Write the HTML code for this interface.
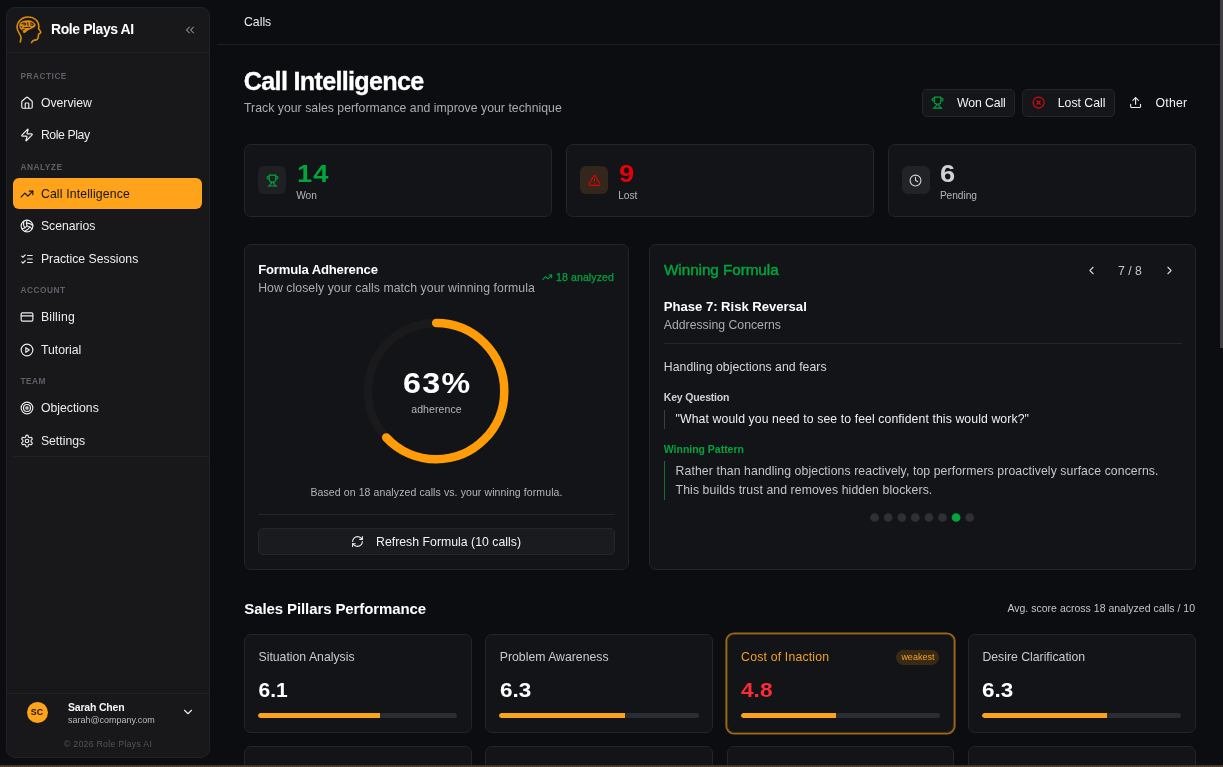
<!DOCTYPE html>
<html lang="en">
<head>
<meta charset="utf-8">
<title>Call Intelligence</title>
<style>
*{box-sizing:border-box;margin:0;padding:0}
html,body{width:1223px;height:767px;overflow:hidden;background:#0c0d11;}
body{font-family:"Liberation Sans",sans-serif;font-size:12.25px;color:#f2f2f3;position:relative;-webkit-font-smoothing:antialiased}
.abs{position:absolute}
svg{display:block}
/* ---------- sidebar ---------- */
#sb{position:absolute;left:6px;top:7px;width:204px;height:751px;background:#18181b;border:1px solid #222327;border-radius:9px;}
#sb .hd{position:absolute;left:0;top:0;width:100%;height:45px;border-bottom:1px solid #202125}
#sb .brand{position:absolute;left:44px;top:13px;font-weight:bold;font-size:14px;letter-spacing:-0.42px;color:#fff;white-space:nowrap}
.lbl{position:absolute;left:13.5px;font-size:8.3px;letter-spacing:0.5px;color:#5f6068;font-weight:bold;white-space:nowrap}
.nav{position:absolute;left:6.4px;width:188.6px;height:31px;border-radius:6px;white-space:nowrap;color:#ececee}
.nav span{position:absolute;left:27.5px;top:9px;font-size:12.25px;line-height:15px}
.nav svg{position:absolute;left:7px;top:9px;width:14px;height:14px;fill:none;stroke:currentColor;stroke-width:2;stroke-linecap:round;stroke-linejoin:round}
.nav.on{background:#ffa31a;color:#141414}
#sb .sep{position:absolute;left:7px;right:0;top:448px;height:1px;background:#212226}
#sb .ft{position:absolute;left:0;right:0;top:685px;height:1px;background:#202125}
/* ---------- main ---------- */
#topline{position:absolute;left:217px;top:44px;width:1003px;height:1px;background:#1f2025}
.card{position:absolute;background:#131418;border:1px solid #24252a;border-radius:7px}
.btn{position:absolute;top:89px;height:27.7px;background:#15161a;border:1px solid #24252a;border-radius:5px;white-space:nowrap}
.btn span{position:absolute;top:6px;font-size:12.25px;line-height:15px;color:#f2f2f3}
.muted{color:#abacb3}
.ico{fill:none;stroke:currentColor;stroke-width:2;stroke-linecap:round;stroke-linejoin:round}
.sq{position:absolute;left:13px;top:21.5px;width:28px;height:28px;border-radius:6px}
.big{position:absolute;left:51.5px;top:14.3px;font-weight:bold;font-size:24.8px;line-height:30px;letter-spacing:1px;transform:scaleX(1.1);transform-origin:0 50%}
.sm{position:absolute;left:51.2px;top:44px;font-size:10.2px;letter-spacing:-0.05px;line-height:13px;color:#b4b5bb}
.pt{position:absolute;left:13.5px;top:15.2px;font-size:12.25px;line-height:15px;color:#c9cad0;white-space:nowrap}
.pv{position:absolute;left:13.5px;top:42.2px;font-weight:bold;font-size:21px;line-height:26px;color:#fff}
.bar{position:absolute;left:13px;right:13.5px;top:78px;height:5.2px;border-radius:2.6px;background:#2b2c31;overflow:hidden}
.bar i{display:block;height:5.2px;background:#fba31c;border-radius:2.6px 0 0 2.6px}
</style>
</head>
<body>
<div id="root" style="position:absolute;left:0;top:0;width:1223px;height:767px;overflow:hidden;will-change:transform;transform:translateZ(0)">

<!-- ================= SIDEBAR ================= -->
<div id="sb">
  <div class="hd"></div>
  <svg class="abs" style="left:3px;top:2px;width:40px;height:40px" viewBox="0 0 40 40">
    <g transform="translate(18.75 19.4) scale(0.96) translate(-18.7 -19.15)">
    <path d="M9.9 32.3 L10.7 28.2 C10.8 26.6 10 25.2 9 23.6 C7.6 21.4 6.5 19.4 6.5 17 C6.5 13.6 7.9 11.4 9.9 9.4 C12 7.4 14.6 6.3 17.7 6.3 C21.2 6.3 24 7.2 26.1 9.1 C28 10.9 29.2 13.4 29.2 16.2 C29.2 17 29 17.7 28.9 18.3 L30.9 21.2 C31.5 22.1 31.2 22.7 30.3 23.2 L28.9 24.2 C28.6 25.4 28.9 26.3 28.6 27.6 C28.2 29.3 27.2 30.1 25.6 30.3 C24.4 30.4 23.7 30.4 23.2 30.8 C22.4 31.5 22 32.2 21.6 32.9" fill="none" stroke="#dc8a12" stroke-width="1.65" stroke-linecap="round" stroke-linejoin="round"/>
    <path d="M8.9 14.3 C9.5 12.4 10.6 11.2 12.5 10.4 C14.6 9.6 16.6 9.4 18.6 9.6 C21.4 9.9 23.6 11 25 12.8 C26 14.1 26.1 15.4 25.4 16.2 C24.3 17.3 22.6 17.9 20.8 18.8 C19.2 19.6 17.8 20.2 16.8 21 C16 21.7 15.4 22.6 14.2 22.9 C13.2 23.1 12.7 22.6 12.8 21.6 C12.9 20.6 12 20.2 11 19.6 C9.4 18.6 8.4 16.4 8.9 14.3 Z" fill="#dc8a12"/>
    <g fill="none" stroke="#2a1c0a" stroke-width="1.1" stroke-linecap="round">
      <path d="M11.6 13.4 C12.8 12.2 14.4 12.2 15.4 13.2 C15.8 14.4 14.6 15 13.6 14.4"/>
      <path d="M17.6 12 C17.8 13 17.6 14 18 15"/>
      <path d="M20.6 12.4 C21.6 12.2 23.2 13 23.4 14.4 C22.6 15 21.4 15 20.8 14.4"/>
      <path d="M10.6 16.4 L11.6 16.8"/>
      <path d="M14 17.4 C15.4 16.8 17 17.6 18.4 17 C19 16.8 19.6 16.8 20 17.2"/>
      <path d="M12.6 19.4 L14 19.2"/>
    </g>
    </g>
  </svg>
  <div class="brand">Role Plays AI</div>
  <div class="lbl" style="top:62.9px;line-height:10px">PRACTICE</div>
  <div class="nav" style="top:79.4px"><svg viewBox="0 0 24 24"><path d="M15 21v-8a1 1 0 0 0-1-1h-4a1 1 0 0 0-1 1v8"/><path d="M3 10a2 2 0 0 1 .709-1.528l7-5.999a2 2 0 0 1 2.582 0l7 5.999A2 2 0 0 1 21 10v9a2 2 0 0 1-2 2H5a2 2 0 0 1-2-2z"/></svg><span>Overview</span></div>
  <div class="nav" style="top:111.2px"><svg viewBox="0 0 24 24"><path d="M4 14a1 1 0 0 1-.78-1.63l9.9-10.2a.5.5 0 0 1 .86.46l-1.92 6.02A1 1 0 0 0 13 10h7a1 1 0 0 1 .78 1.63l-9.9 10.2a.5.5 0 0 1-.86-.46l1.92-6.02A1 1 0 0 0 11 14z"/></svg><span style="letter-spacing:-0.4px">Role Play</span></div>
  <div class="lbl" style="top:153.9px;line-height:10px">ANALYZE</div>
  <div class="nav on" style="top:170.4px"><svg viewBox="0 0 24 24"><polyline points="22 7 13.5 15.5 8.5 10.5 2 17"/><polyline points="16 7 22 7 22 13"/></svg><span style="letter-spacing:0.15px">Call Intelligence</span></div>
  <div class="nav" style="top:202.2px"><svg viewBox="0 0 24 24"><path d="M11.1 7.1a16.55 16.55 0 0 1 10.9 4"/><path d="M12 12a12.6 12.6 0 0 1-8.7 5"/><path d="M16.8 13.6a16.55 16.55 0 0 1-9 7.5"/><path d="M20.7 17a12.8 12.8 0 0 0-8.7-5 13.3 13.3 0 0 1 0-10"/><path d="M6.3 3.8a16.55 16.55 0 0 0 1.9 11.5"/><circle cx="12" cy="12" r="10"/></svg><span>Scenarios</span></div>
  <div class="nav" style="top:235.2px"><svg viewBox="0 0 24 24"><path d="m3 17 2 2 4-4"/><path d="m3 7 2 2 4-4"/><path d="M13 6h8"/><path d="M13 12h8"/><path d="M13 18h8"/></svg><span>Practice Sessions</span></div>
  <div class="lbl" style="top:276.8px;line-height:10px">ACCOUNT</div>
  <div class="nav" style="top:293.2px"><svg viewBox="0 0 24 24"><rect width="20" height="14" x="2" y="5" rx="2"/><line x1="2" x2="22" y1="10" y2="10"/></svg><span style="letter-spacing:0.2px">Billing</span></div>
  <div class="nav" style="top:326.2px"><svg viewBox="0 0 24 24"><circle cx="12" cy="12" r="10"/><polygon points="10 8 16 12 10 16 10 8"/></svg><span>Tutorial</span></div>
  <div class="lbl" style="top:367.8px;line-height:10px">TEAM</div>
  <div class="nav" style="top:384.2px"><svg viewBox="0 0 24 24"><circle cx="12" cy="12" r="10"/><circle cx="12" cy="12" r="6"/><circle cx="12" cy="12" r="2"/></svg><span>Objections</span></div>
  <div class="nav" style="top:417.2px"><svg viewBox="0 0 24 24"><path d="M12.22 2h-.44a2 2 0 0 0-2 2v.18a2 2 0 0 1-1 1.73l-.43.25a2 2 0 0 1-2 0l-.15-.08a2 2 0 0 0-2.73.73l-.22.38a2 2 0 0 0 .73 2.73l.15.1a2 2 0 0 1 1 1.72v.51a2 2 0 0 1-1 1.74l-.15.09a2 2 0 0 0-.73 2.73l.22.38a2 2 0 0 0 2.73.73l.15-.08a2 2 0 0 1 2 0l.43.25a2 2 0 0 1 1 1.73V20a2 2 0 0 0 2 2h.44a2 2 0 0 0 2-2v-.18a2 2 0 0 1 1-1.73l.43-.25a2 2 0 0 1 2 0l.15.08a2 2 0 0 0 2.73-.73l.22-.39a2 2 0 0 0-.73-2.73l-.15-.08a2 2 0 0 1-1-1.74v-.5a2 2 0 0 1 1-1.74l.15-.09a2 2 0 0 0 .73-2.73l-.22-.38a2 2 0 0 0-2.73-.73l-.15.08a2 2 0 0 1-2 0l-.43-.25a2 2 0 0 1-1-1.73V4a2 2 0 0 0-2-2z"/><circle cx="12" cy="12" r="3"/></svg><span>Settings</span></div>
  <div class="sep"></div>
  <svg class="ico abs" style="left:176px;top:15px;width:14px;height:14px;color:#b9b9bf;stroke-width:1.7" viewBox="0 0 24 24"><path d="m11 17-5-5 5-5"/><path d="m18 17-5-5 5-5"/></svg>
  <div class="ft"></div>
  <div class="abs" style="left:19.5px;top:693.5px;width:21px;height:21px;border-radius:50%;background:#ffa31a;color:#1a1206;font-weight:bold;font-size:8.8px;line-height:21px;text-align:center;letter-spacing:0.2px">SC</div>
  <div class="abs" style="left:61px;top:693px;font-weight:bold;font-size:10.5px;line-height:13px;color:#f4f4f5;white-space:nowrap;letter-spacing:-0.2px">Sarah Chen</div>
  <div class="abs" style="left:61px;top:706.5px;font-size:9px;line-height:11px;color:#b9bac0;white-space:nowrap;letter-spacing:-0.02px">sarah@company.com</div>
  <svg class="ico abs" style="left:174px;top:697px;width:14px;height:14px;color:#e4e4e7" viewBox="0 0 24 24"><path d="m6 9 6 6 6-6"/></svg>
  <div class="abs" style="left:0;width:202px;top:730.5px;text-align:center;font-size:8.7px;line-height:11px;color:#54555c;letter-spacing:0.3px">© 2026 Role Plays AI</div>
</div>

<!-- ================= MAIN ================= -->
<div class="abs" style="left:244px;top:15.3px;font-size:12.25px;line-height:15px;color:#ececee">Calls</div>
<div id="topline"></div>

<div class="abs" style="left:243.8px;top:66.1px;-webkit-text-stroke:0.3px #fff;font-weight:bold;font-size:25.2px;line-height:30px;letter-spacing:-0.7px;color:#fff;white-space:nowrap">Call Intelligence</div>
<div class="abs muted" style="left:244px;top:100.8px;font-size:12.25px;line-height:15px;letter-spacing:0.03px;white-space:nowrap">Track your sales performance and improve your technique</div>

<div class="btn" style="left:922px;width:93px"><svg class="ico abs" style="left:8.3px;top:6px;width:13.2px;height:13.2px;color:#02a43e" viewBox="0 0 24 24"><path d="M6 9H4.5a2.5 2.5 0 0 1 0-5H6"/><path d="M18 9h1.5a2.5 2.5 0 0 0 0-5H18"/><path d="M4 22h16"/><path d="M10 14.66V17c0 .55-.47.98-.97 1.21C7.85 18.75 7 20.24 7 22"/><path d="M14 14.66V17c0 .55.47.98.97 1.21C16.15 18.75 17 20.24 17 22"/><path d="M18 2H6v7a6 6 0 0 0 12 0V2Z"/></svg><span style="left:34px;letter-spacing:-0.1px">Won Call</span></div>
<div class="btn" style="left:1021.8px;width:93px"><svg class="ico abs" style="left:8.8px;top:6px;width:13.2px;height:13.2px;color:#e10812" viewBox="0 0 24 24"><circle cx="12" cy="12" r="10"/><path d="m15 9-6 6"/><path d="m9 9 6 6"/></svg><span style="left:35px">Lost Call</span></div>
<svg class="ico abs" style="left:1129.2px;top:96.2px;width:13.2px;height:13.2px;color:#ececee" viewBox="0 0 24 24"><path d="M21 15v4a2 2 0 0 1-2 2H5a2 2 0 0 1-2-2v-4"/><polyline points="17 8 12 3 7 8"/><line x1="12" x2="12" y1="3" y2="15"/></svg>
<div class="abs" style="left:1155.6px;top:96.1px;font-size:12.25px;line-height:15px;letter-spacing:0.2px;color:#f2f2f3">Other</div>

<!-- stat cards -->
<div class="card" style="left:244px;top:143.5px;width:308px;height:73px">
  <div class="sq" style="background:#1f2024"><svg class="ico abs" style="left:7.5px;top:7.5px;width:13px;height:13px;color:#02a43e" viewBox="0 0 24 24"><path d="M6 9H4.5a2.5 2.5 0 0 1 0-5H6"/><path d="M18 9h1.5a2.5 2.5 0 0 0 0-5H18"/><path d="M4 22h16"/><path d="M10 14.66V17c0 .55-.47.98-.97 1.21C7.85 18.75 7 20.24 7 22"/><path d="M14 14.66V17c0 .55.47.98.97 1.21C16.15 18.75 17 20.24 17 22"/><path d="M18 2H6v7a6 6 0 0 0 12 0V2Z"/></svg></div>
  <div class="big" style="color:#02a43e">14</div><div class="sm">Won</div>
</div>
<div class="card" style="left:566px;top:143.5px;width:308px;height:73px">
  <div class="sq" style="background:#33261a"><svg class="ico abs" style="left:7.5px;top:7.5px;width:13px;height:13px;color:#e7000b" viewBox="0 0 24 24"><path d="m21.73 18-8-14a2 2 0 0 0-3.48 0l-8 14A2 2 0 0 0 4 21h16a2 2 0 0 0 1.73-3"/><path d="M12 9v4"/><path d="M12 17h.01"/></svg></div>
  <div class="big" style="color:#e7000b">9</div><div class="sm">Lost</div>
</div>
<div class="card" style="left:887.7px;top:143.5px;width:308px;height:73px">
  <div class="sq" style="background:#222327"><svg class="ico abs" style="left:7.5px;top:7.5px;width:13px;height:13px;color:#d4d4d8" viewBox="0 0 24 24"><circle cx="12" cy="12" r="10"/><polyline points="12 6 12 12 16 14"/></svg></div>
  <div class="big" style="color:#d0d1d6">6</div><div class="sm">Pending</div>
</div>

<!-- formula adherence -->
<div class="card" style="left:244px;top:244px;width:385px;height:325.5px">
  <div class="abs" style="left:13.2px;top:17px;font-weight:bold;font-size:13.1px;line-height:16px;letter-spacing:-0.17px;color:#fff;white-space:nowrap">Formula Adherence</div>
  <div class="abs muted" style="left:13.2px;top:35.8px;font-size:12.25px;line-height:15px;letter-spacing:0.06px;white-space:nowrap">How closely your calls match your winning formula</div>
  <svg class="ico abs" style="left:297px;top:27px;width:10.5px;height:10.5px;stroke-width:2.4;color:#02a43e" viewBox="0 0 24 24"><polyline points="22 7 13.5 15.5 8.5 10.5 2 17"/><polyline points="16 7 22 7 22 13"/></svg>
  <div class="abs" style="left:311px;top:26px;font-size:10.5px;line-height:13px;letter-spacing:0.12px;-webkit-text-stroke:0.25px #02a43e;color:#02a43e;white-space:nowrap">18 analyzed</div>
  <svg class="abs" style="left:111px;top:65.5px;width:160px;height:160px" viewBox="0 0 160 160">
    <circle cx="80.2" cy="80.2" r="68.1" fill="none" stroke="#1a1a1d" stroke-width="8.5"/>
    <circle cx="80.2" cy="80.2" r="68.1" fill="none" stroke="#ff9c08" stroke-width="8.5" stroke-linecap="round" stroke-dasharray="269.57 427.9" transform="rotate(-90 80.2 80.2)"/>
  </svg>
  <div class="abs" style="left:111px;width:161px;top:121px;text-align:center;font-weight:bold;font-size:29.3px;line-height:34px;letter-spacing:1.2px;color:#fff;text-indent:1.2px;transform:scaleX(1.1)">63%</div>
  <div class="abs" style="left:111px;width:161px;top:158.3px;text-align:center;font-size:10.5px;line-height:13px;letter-spacing:0.1px;color:#b4b5bb">adherence</div>
  <div class="abs" style="left:0;width:383px;top:241px;text-align:center;font-size:10.5px;line-height:13px;letter-spacing:0.1px;color:#b4b5bb">Based on 18 analyzed calls vs. your winning formula.</div>
  <div class="abs" style="left:13px;width:357px;top:269px;height:1px;background:#24252a"></div>
  <div class="abs" style="left:13px;width:357px;top:283.3px;height:27px;border:1px solid #25262b;border-radius:5px;background:#1a1b1f">
    <svg class="ico abs" style="left:91.5px;top:6px;width:13px;height:13px;color:#ececee" viewBox="0 0 24 24"><path d="M3 12a9 9 0 0 1 9-9 9.75 9.75 0 0 1 6.74 2.74L21 8"/><path d="M21 3v5h-5"/><path d="M21 12a9 9 0 0 1-9 9 9.75 9.75 0 0 1-6.74-2.74L3 16"/><path d="M8 16H3v5"/></svg>
    <div class="abs" style="left:117px;top:5.8px;font-size:12.25px;line-height:15px;letter-spacing:0.03px;color:#f2f2f3;white-space:nowrap">Refresh Formula (10 calls)</div>
  </div>
</div>

<!-- winning formula -->
<div class="card" style="left:649px;top:244px;width:547px;height:325.5px">
  <div class="abs" style="left:14px;top:16.1px;font-size:15.3px;line-height:18px;letter-spacing:-0.07px;-webkit-text-stroke:0.45px #02a43e;color:#02a43e;white-space:nowrap">Winning Formula</div>
  <svg class="ico abs" style="left:434.5px;top:19px;width:13px;height:13px;color:#d4d4d8" viewBox="0 0 24 24"><path d="m15 18-6-6 6-6"/></svg>
  <div class="abs" style="left:468px;top:18.7px;font-size:12.25px;line-height:15px;color:#c4c5cb;white-space:nowrap">7 / 8</div>
  <svg class="ico abs" style="left:512.5px;top:19px;width:13px;height:13px;color:#d4d4d8" viewBox="0 0 24 24"><path d="m9 18 6-6-6-6"/></svg>
  <div class="abs" style="left:13.8px;top:54px;font-weight:bold;font-size:13.1px;line-height:16px;letter-spacing:-0.02px;color:#fff;white-space:nowrap">Phase 7: Risk Reversal</div>
  <div class="abs muted" style="left:13.8px;top:73.2px;font-size:12.25px;line-height:15px;white-space:nowrap">Addressing Concerns</div>
  <div class="abs" style="left:14px;width:517.5px;top:98px;height:1px;background:#26272c"></div>
  <div class="abs" style="left:13.8px;top:114.6px;font-size:12.25px;line-height:15px;letter-spacing:0.05px;color:#d6d7db;white-space:nowrap">Handling objections and fears</div>
  <div class="abs" style="left:13.8px;top:146px;font-weight:bold;font-size:10.5px;line-height:13px;letter-spacing:-0.18px;color:#cfd0d5;white-space:nowrap">Key Question</div>
  <div class="abs" style="left:13.8px;top:164.8px;width:1.7px;height:19.2px;background:#3c3d42"></div>
  <div class="abs" style="left:25.6px;top:166.6px;font-size:12.25px;line-height:15px;letter-spacing:0.1px;color:#efeff1;white-space:nowrap">"What would you need to see to feel confident this would work?"</div>
  <div class="abs" style="left:13.8px;top:198px;font-weight:bold;font-size:10.5px;line-height:13px;letter-spacing:-0.02px;color:#02a43e;white-space:nowrap">Winning Pattern</div>
  <div class="abs" style="left:13.8px;top:216.4px;width:1.7px;height:38.3px;background:#156c36"></div>
  <div class="abs" style="left:25.6px;top:217.3px;font-size:12.25px;line-height:18.7px;letter-spacing:0.09px;color:#c4c5cb;white-space:nowrap">Rather than handling objections reactively, top performers proactively surface concerns.<br>This builds trust and removes hidden blockers.</div>
  <svg class="abs" style="left:200px;top:260px;width:140px;height:26px" viewBox="0 0 140 26"><circle cx="24.6" cy="12.5" r="4.35" fill="#303034"/><circle cx="38.2" cy="12.5" r="4.35" fill="#303034"/><circle cx="51.8" cy="12.5" r="4.35" fill="#303034"/><circle cx="65.3" cy="12.5" r="4.35" fill="#303034"/><circle cx="78.9" cy="12.5" r="4.35" fill="#303034"/><circle cx="92.5" cy="12.5" r="4.35" fill="#303034"/><circle cx="106.1" cy="12.5" r="4.35" fill="#02a43e"/><circle cx="119.7" cy="12.5" r="4.35" fill="#303034"/></svg>
</div>

<!-- pillars -->
<div class="abs" style="left:244.3px;top:599.7px;font-weight:bold;font-size:15px;line-height:18px;letter-spacing:-0.1px;color:#fff;white-space:nowrap">Sales Pillars Performance</div>
<div class="abs" style="right:28px;top:602px;font-size:10.5px;line-height:13px;letter-spacing:0.01px;color:#c4c5cb;white-space:nowrap">Avg. score across 18 analyzed calls / 10</div>

<div class="card" style="left:244px;top:634.2px;width:227.8px;height:98.5px"><div class="pt">Situation Analysis</div><div class="pv">6.1</div><div class="bar"><i style="width:61%"></i></div></div>
<div class="card" style="left:485.3px;top:634.2px;width:227.8px;height:98.5px"><div class="pt">Problem Awareness</div><div class="pv" style="transform:scaleX(1.07);transform-origin:0 50%">6.3</div><div class="bar"><i style="width:63%"></i></div></div>
<div class="card" style="left:726.6px;top:634.2px;width:227.8px;height:98.5px;border-color:#4a3516;box-shadow:0 0 0 1.6px #9c6617"><div class="pt" style="color:#f0a02a;letter-spacing:0.19px">Cost of Inaction</div><div class="abs" style="right:14px;top:15px;width:43px;height:15px;border-radius:8px;background:#3a2a13;color:#f0a02a;font-size:9px;line-height:15px;text-align:center">weakest</div><div class="pv" style="color:#fb2c36;transform:scaleX(1.08);transform-origin:0 50%">4.8</div><div class="bar"><i style="width:48%"></i></div></div>
<div class="card" style="left:967.9px;top:634.2px;width:227.8px;height:98.5px"><div class="pt">Desire Clarification</div><div class="pv" style="transform:scaleX(1.07);transform-origin:0 50%">6.3</div><div class="bar"><i style="width:63%"></i></div></div>

<div class="card" style="left:244px;top:746px;width:227.8px;height:40px"></div>
<div class="card" style="left:485.3px;top:746px;width:227.8px;height:40px"></div>
<div class="card" style="left:726.6px;top:746px;width:227.8px;height:40px"></div>
<div class="card" style="left:967.9px;top:746px;width:227.8px;height:40px"></div>

<!-- scrollbar + bottom strip -->
<div class="abs" style="left:1219.5px;top:0;width:3.5px;height:347.5px;background:#403e42"></div>
<div class="abs" style="left:0;top:765px;width:1223px;height:2px;background:#37373a"></div>
<div class="abs" style="left:0;top:766px;width:1223px;height:1px;background:repeating-linear-gradient(90deg,#38383b 0 1px,#6e440f 1px 2px)"></div>

</div>
</body>
</html>
